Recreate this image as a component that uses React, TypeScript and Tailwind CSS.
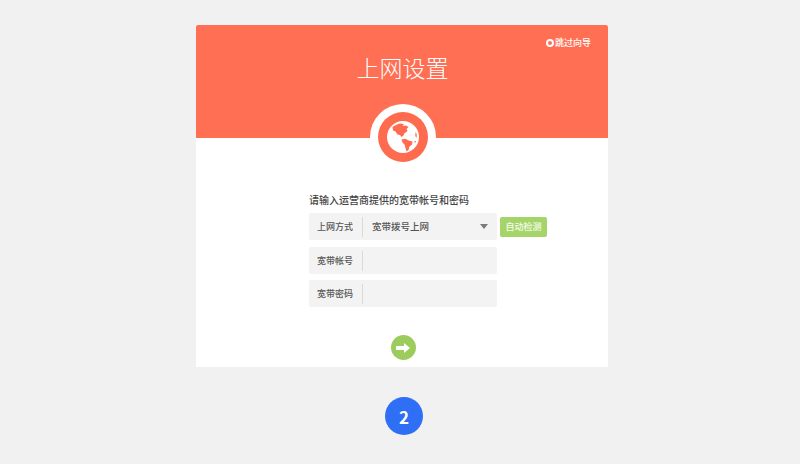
import React from 'react';

const fontStack = { fontFamily: '"Noto Sans CJK SC", "Liberation Sans", sans-serif' };

const Globe = () => (
  <svg viewBox="0 0 32 32" className="w-[32px] h-[32px]">
    <circle cx="16" cy="16" r="16" fill="#ffffff" />
    {/* North America */}
    <path
      d="M5.5 6 C8 4 11 2.6 14 2.4 L17 3.4 L15.6 5 L19 4.6 L21.5 6 L19.5 8 L20.5 9.5 L19 11.5 L17.5 12 L16.5 14.5 L14.5 16 L13 14 L10.5 13.5 L8.5 10.5 L6 9.5 Z"
      fill="#ff6b4f"
    />
    {/* South America */}
    <path
      d="M14.5 18.5 L18.5 17.8 L21.5 19.5 L25.5 20.5 L25 23.5 L22.5 25.5 L21.5 29 L19.5 30.5 L18.5 27 L17.5 23.5 L15.5 21.5 Z"
      fill="#ff6b4f"
    />
    <path d="M28.5 11 L29.8 13.5 L29.6 17 L28.3 15 Z M27.4 20 L29 20 L28 22.5 Z" fill="#ff6b4f" />
  </svg>
);

const NextArrow = () => (
  <svg viewBox="0 0 14 10" className="w-[14px] h-[10px]">
    <path d="M0 3 H8 V0 L14 5 L8 10 V7 H0 Z" fill="#ffffff" />
  </svg>
);

const Row = ({ label, children }: { label: string; children?: React.ReactNode }) => (
  <div className="flex items-center w-[188px] h-[27px] bg-[#f3f3f3] rounded-[2px]">
    <span className="w-[54px] pl-[8px] text-[9px] leading-none text-[#555555] font-medium border-r border-[#d9d9d9] h-[20px] flex items-center shrink-0">
      {label}
    </span>
    {children}
  </div>
);

export default function App() {
  return (
    <div className="w-[800px] h-[464px] bg-[#f1f1f1] flex flex-col items-center pl-[4px] pt-[25px] overflow-hidden" style={fontStack}>
      <div className="w-[412px] h-[342px] bg-white rounded-t-[2px] flex flex-col relative">
        {/* Orange header */}
        <div className="h-[113px] bg-[#ff6f53] rounded-t-[2px] flex flex-col items-center relative">
          <div className="absolute right-[17px] top-[13px] flex items-center gap-[1px] text-white text-[9px] leading-none font-medium">
            <span className="w-[8px] h-[8px] rounded-full border-[2px] border-white" />
            跳过向导
          </div>
          <h1 className="mt-[25px] text-[23px] leading-[34px] font-light text-white pl-[1px]">上网设置</h1>
        </div>

        {/* Globe badge */}
        <div className="absolute left-[174px] top-[79px] w-[66px] h-[66px] rounded-full bg-white flex items-center justify-center">
          <div className="w-[50px] h-[50px] rounded-full bg-[#ff6b4f] flex items-center justify-center">
            <Globe />
          </div>
        </div>

        {/* Form */}
        <div className="flex flex-col pl-[113px] pt-[55px]">
          <p className="text-[10px] leading-[14px] text-[#444444] font-medium mb-[6px]">请输入运营商提供的宽带帐号和密码</p>
          <div className="flex items-center gap-[3px] mb-[7px]">
            <Row label="上网方式">
              <span className="ml-[9px] text-[9.5px] leading-none text-[#555555] font-medium">宽带拨号上网</span>
              <span className="ml-auto mr-[9px] w-0 h-0 border-x-[4px] border-x-transparent border-t-[5px] border-t-[#7a7a7a]" />
            </Row>
            <button className="w-[47px] h-[20px] bg-[#a5d568] rounded-[2px] text-[9px] leading-none text-white/90 font-medium">
              自动检测
            </button>
          </div>
          <div className="flex flex-col gap-[6px]">
            <Row label="宽带帐号" />
            <Row label="宽带密码" />
          </div>
        </div>

        {/* Next */}
        <div className="flex justify-center pl-[2px] mt-[28px]">
          <button className="w-[25px] h-[25px] rounded-full bg-[#9ccd5c] flex items-center justify-center">
            <NextArrow />
          </button>
        </div>
      </div>

      {/* Step marker */}
      <div className="ml-[4px] mt-[30px] w-[38px] h-[38px] rounded-full bg-[#2f6ff5] flex items-center justify-center text-white text-[17px] font-bold leading-none">
        2
      </div>
    </div>
  );
}
